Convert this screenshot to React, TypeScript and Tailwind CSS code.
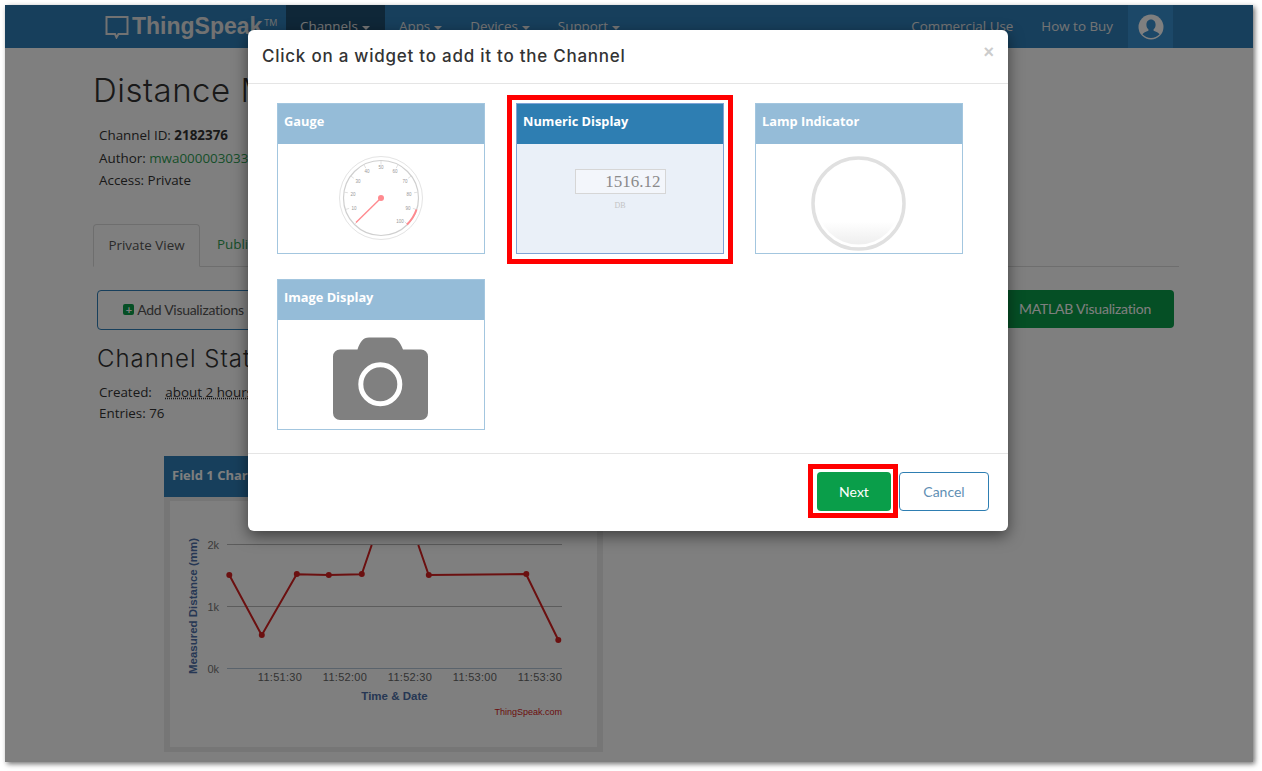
import React from "react";

const bodyFont = "font-['Open_Sans','Noto_Sans',sans-serif]";
const headFont = "font-['Lato','Inter',sans-serif]";
const titleFont = "font-['Inter','Lato',sans-serif]";

const gaugeLabels = [
  { t: "10", x: -27, y: 10 },
  { t: "20", x: -28, y: -4 },
  { t: "30", x: -23, y: -17 },
  { t: "40", x: -14, y: -27 },
  { t: "50", x: 0, y: -31 },
  { t: "60", x: 14, y: -27 },
  { t: "70", x: 24, y: -17 },
  { t: "80", x: 28, y: -4 },
  { t: "90", x: 27, y: 10 },
  { t: "100", x: 19, y: 23 },
];

function GaugeIcon() {
  return (
    <svg width="206" height="109" viewBox="-103 -54 206 109">
      <circle r="41.5" fill="#fff" stroke="#e4e4e4" strokeWidth="1" />
      <circle r="37.5" fill="#fff" stroke="#cfcfcf" strokeWidth="1.2" />
      {Array.from({ length: 11 }).map((_, i) => {
        const a = ((135 + i * 27) * Math.PI) / 180;
        return (
          <line
            key={i}
            x1={Math.cos(a) * 33.5}
            y1={Math.sin(a) * 33.5}
            x2={Math.cos(a) * 37}
            y2={Math.sin(a) * 37}
            stroke="#ccc"
            strokeWidth="0.6"
          />
        );
      })}
      {gaugeLabels.map((l) => (
        <text key={l.t} x={l.x} y={l.y + 2} textAnchor="middle" fontSize="4.5" fill="#999" fontFamily="Liberation Sans, sans-serif">
          {l.t}
        </text>
      ))}
      <path d="M 35.5 11.5 A 37 37 0 0 1 26 26.5" fill="none" stroke="#ff8a8f" strokeWidth="2" />
      <line x1="0" y1="0" x2="-25" y2="24.5" stroke="#ff8a8f" strokeWidth="1.4" />
      <circle r="3" fill="#ff8a8f" />
    </svg>
  );
}

function LampIcon() {
  return (
    <svg width="206" height="109" viewBox="0 0 206 109">
      <defs>
        <linearGradient id="lampFill" x1="0" y1="0" x2="0" y2="1">
          <stop offset="0.72" stopColor="#ffffff" />
          <stop offset="1" stopColor="#eeeeee" />
        </linearGradient>
      </defs>
      <circle cx="102.5" cy="59.5" r="45.5" fill="#fff" stroke="#e0e0e0" strokeWidth="3.5" />
      <circle cx="102.5" cy="59.5" r="41" fill="url(#lampFill)" />
    </svg>
  );
}

function CameraIcon() {
  return (
    <svg width="206" height="109" viewBox="0 0 206 109">
      <path
        d="M62 29.5H79.5C82 22 85 17.5 91 17.5H113C119 17.5 122 22 125 29.5H143a7 7 0 0 1 7 7V93a7 7 0 0 1-7 7H62a7 7 0 0 1-7-7V36.5a7 7 0 0 1 7-7z"
        fill="#808080"
      />
      <circle cx="102.3" cy="64.3" r="19.5" fill="none" stroke="#fff" strokeWidth="5" />
    </svg>
  );
}

function NumericPreview() {
  return (
    <div className="flex h-full flex-col items-center pt-[25px] font-['Liberation_Serif',serif]">
      <div className="flex h-[25px] w-[91px] items-center justify-end border border-[#d6d6d6] bg-[#f3f6fb] pr-[4px] text-[17px] text-[#8b8b8b]">
        1516.12
      </div>
      <div className="mt-[6px] text-[8px] text-[#c4c4c4]">DB</div>
    </div>
  );
}

function WidgetCard({
  title,
  active,
  children,
}: {
  title: string;
  active?: boolean;
  children: React.ReactNode;
}) {
  return (
    <div className={`relative h-[151px] w-[208px] border ${active ? "border-[#7fa3d6] bg-[#eaf0f8]" : "border-[#a3c6df] bg-white"}`}>
      {active && <span className="absolute -bottom-[11px] -left-[10px] -right-[10px] -top-[9px] border-[5px] border-[#ff0000]" />}
      <div className={`flex h-[40px] items-center px-[6px] pb-[4px] text-[12.8px] font-bold text-white ${active ? "bg-[#2e7eb2]" : "bg-[#95bcd8]"} ${bodyFont}`}>
        {title}
      </div>
      <div className="h-[109px] overflow-hidden">{children}</div>
    </div>
  );
}

function ChartCard() {
  const pts = [
    [65, 78],
    [97.5, 138],
    [132.5, 77],
    [164.5, 78],
    [197.5, 77],
    [264.5, 78],
    [362, 77],
    [394, 143],
  ];
  return (
    <div className="ml-[159px] mt-[32px] w-[439px]">
      <div className={`flex h-[41px] items-center bg-[#2e7eb8] px-2 text-[13px] font-bold text-white ${bodyFont}`}>Field 1 Chart</div>
      <div className="h-[255px] border-x-[6px] border-b-[5px] border-t-[4px] border-[#ececec] bg-white">
        <svg width="427" height="246" viewBox="170 501 427 246" fontFamily="Liberation Sans, sans-serif">
          {[544.5, 606.5].map((y) => (
            <line key={y} x1="227" x2="562" y1={y} y2={y} stroke="#b8b8b8" strokeWidth="1" />
          ))}
          <line x1="227" x2="562" y1="668.5" y2="668.5" stroke="#b4c6d8" strokeWidth="1" />
          <text x="219" y="549" textAnchor="end" fontSize="11" fill="#777">2k</text>
          <text x="219" y="611" textAnchor="end" fontSize="11" fill="#777">1k</text>
          <text x="219" y="673" textAnchor="end" fontSize="11" fill="#777">0k</text>
          {["11:51:30", "11:52:00", "11:52:30", "11:53:00", "11:53:30"].map((t, i) => (
            <text key={t} x={280 + i * 65} y="681" textAnchor="middle" fontSize="11" letterSpacing="0.3" fill="#666">
              {t}
            </text>
          ))}
          <text x="394.5" y="700" textAnchor="middle" fontSize="11.5" fontWeight="bold" fill="#4d6fa8">Time &amp; Date</text>
          <text x="197" y="606" textAnchor="middle" fontSize="11.5" fontWeight="bold" fill="#4d6fa8" transform="rotate(-90 197 606)">
            Measured Distance (mm)
          </text>
          <text x="562" y="715" textAnchor="end" fontSize="9" fill="#d62020">ThingSpeak.com</text>
          <polyline
            points="229.3,575 261.7,635.3 296.7,574.3 328.7,575 361.7,574.3 371.7,545"
            fill="none"
            stroke="#d62020"
            strokeWidth="2"
          />
          <polyline points="418.3,545 428.7,575 526,574 558.3,640" fill="none" stroke="#d62020" strokeWidth="2" />
          {pts.map(([x, y]) => (
            <circle key={x} cx={x + 164.3} cy={y + 497} r="3" fill="#d62020" />
          ))}
        </svg>
      </div>
    </div>
  );
}

function Caret() {
  return <span className="ml-[4px] mt-[2px] inline-block border-x-[4px] border-t-[4px] border-x-transparent border-t-[#e8e8e8]" />;
}

function Navbar() {
  const item = "flex h-full items-center whitespace-nowrap px-[14px] text-[13.4px] text-[#e8e8e8]";
  return (
    <nav className={`flex h-[43px] items-center bg-[#2e7eb8] ${bodyFont}`}>
      <div className="ml-[100px] flex w-[181px] items-center">
        <svg width="24" height="24" viewBox="0 0 24 24" fill="none" stroke="#e4e4e4" strokeWidth="2">
          <path d="M1.5 2h21v17h-9l-2 3.5-1.5-3.5H1.5z" />
        </svg>
        <span className="ml-[3px] font-['Liberation_Sans',sans-serif] text-[23px] font-bold leading-none text-[#e4e4e4]">ThingSpeak</span>
        <span className="mb-2 ml-[2px] text-[9px] leading-none text-[#e4e4e4]">TM</span>
      </div>
      <div className={`${item} w-[99px] bg-[#1f4e70]`}>
        Channels
        <Caret />
      </div>
      <div className={item}>
        Apps
        <Caret />
      </div>
      <div className={item}>
        Devices
        <Caret />
      </div>
      <div className={item}>
        Support
        <Caret />
      </div>
      <div className="ml-auto flex h-full items-center">
        <div className={item}>Commercial Use</div>
        <div className={item}>How to Buy</div>
        <div className="ml-px mr-[80px] flex h-full w-[45px] items-center justify-center bg-[#3890d0]">
          <svg width="26" height="26" viewBox="0 0 26 26">
            <circle cx="13" cy="13" r="12.5" fill="#fff" />
            <path d="M13 5.5c-3 0-4.6 2.4-4.6 5.2 0 2 .8 3.6 2 4.6v1.4c-2.6 1-5 1.8-6 3.6a12 12 0 0 0 17.2 0c-1-1.8-3.4-2.6-6-3.6v-1.4c1.2-1 2-2.6 2-4.6 0-2.8-1.6-5.2-4.6-5.2z" fill="#3890d0" />
          </svg>
        </div>
      </div>
    </nav>
  );
}

export default function App() {
  return (
    <div className="h-[771px] w-full overflow-hidden bg-white pl-[5px] pt-[5px]">
      <div className="relative h-[757px] w-[1248px] overflow-hidden bg-white text-[#333] shadow-[2px_2px_5px_rgba(0,0,0,0.55)]">
        <Navbar />

        <div className={`text-[13.4px] ${bodyFont}`}>
          <h1 className={`ml-[88px] mt-[19px] text-[33px] font-light leading-[46px] tracking-[0.5px] ${titleFont}`}>Distance Measurement</h1>
          <div className="ml-[94px] mt-[11px] leading-[22.5px]">
            <div>
              Channel ID: <b>2182376</b>
            </div>
            <div>
              Author: <span className="text-[#2f9e54]">mwa0000030331234</span>
            </div>
            <div>Access: Private</div>
          </div>

          <div className="ml-[88px] mr-[74px] mt-[32px] flex h-[43px] items-end border-b border-[#ddd]">
            <div className="-mb-px flex h-[43px] w-[107px] items-center justify-center rounded-t border border-[#ddd] border-b-white text-[#555]">Private View</div>
            <div className="ml-[17px] flex h-[42px] items-center text-[#2f9e54]">Public View</div>
          </div>

          <div className="ml-[92px] mr-[79px] mt-[23px] flex items-start justify-between">
            <div className={`flex h-[40px] w-[173px] items-center justify-center whitespace-nowrap rounded border border-[#2e7eb8] text-[14px] tracking-[-0.3px] text-[#555] ${headFont}`}>
              <span className="mr-[3px] flex h-[11px] w-[11px] items-center justify-center rounded-[2px] bg-[#0a9e4a] text-[11px] font-bold leading-none text-white">+</span>
              Add Visualizations
            </div>
            <div className={`flex h-[38px] w-[178px] items-center justify-center rounded bg-[#0a9e4a] text-[14px] tracking-[-0.2px] text-white ${headFont}`}>MATLAB Visualization</div>
          </div>

          <h2 className={`ml-[92px] mt-[12px] text-[24px] font-light leading-[34px] tracking-[1px] ${titleFont}`}>Channel Stats</h2>
          <div className="ml-[94px] mt-[6px] leading-[21px]">
            <div>
              Created: <span className="ml-[10px] underline decoration-dotted">about 2 hours ago</span>
            </div>
            <div>Entries: 76</div>
          </div>

          <ChartCard />
        </div>

        {/* dimming layer behind the dialog */}
        <div className="absolute inset-0 bg-black/50" />

        <div className="absolute left-[243px] top-[25px] flex h-[501px] w-[760px] flex-col rounded-md bg-white shadow-[0_5px_15px_rgba(0,0,0,0.5)]">
          <div className="relative flex h-[54px] items-center border-b border-[#e5e5e5] px-[14px] pt-px">
            <span className={`text-[17px] font-medium tracking-[0.75px] text-[#333] ${titleFont}`}>Click on a widget to add it to the Channel</span>
            <span className="absolute right-[14px] top-[12px] font-['Liberation_Sans',sans-serif] text-[18px] font-bold leading-[20px] text-[#ccc]">×</span>
          </div>
          <div className="grid flex-1 grid-cols-[208px_208px_208px] content-start gap-x-[31px] gap-y-[25px] pl-[29px] pt-[19px]">
            <WidgetCard title="Gauge">
              <GaugeIcon />
            </WidgetCard>
            <WidgetCard title="Numeric Display" active>
              <NumericPreview />
            </WidgetCard>
            <WidgetCard title="Lamp Indicator">
              <LampIcon />
            </WidgetCard>
            <WidgetCard title="Image Display">
              <CameraIcon />
            </WidgetCard>
          </div>
          <div className={`flex h-[78px] items-start justify-end gap-2 border-t border-[#e5e5e5] pr-[19px] pt-[18px] text-[14px] ${headFont}`}>
            <div className="relative flex h-[39px] w-[74px] items-center justify-center rounded bg-[#0a9e4a] text-white">
              <span className="absolute -bottom-[7px] -left-[9px] -right-[7px] -top-[8px] border-[5px] border-[#ff0000]" />
              Next
            </div>
            <div className="flex h-[39px] w-[90px] items-center justify-center rounded border border-[#2e7eb2] text-[#5f8fb4]">Cancel</div>
          </div>
        </div>
      </div>
    </div>
  );
}
